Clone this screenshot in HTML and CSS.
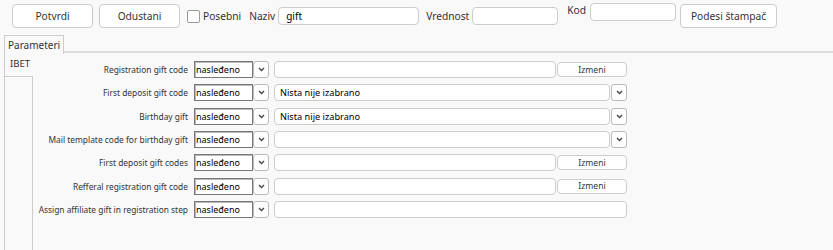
FILE: index.html
```html
<!DOCTYPE html>
<html lang="sr">
<head>
    <meta charset="UTF-8">
    <title>Parametri</title>
    <link rel="stylesheet" href="styles.css">
</head>
<body>
    <div class="toolbar">
        <button class="btn btn-main">Potvrdi</button>
        <button class="btn btn-main btn-cancel">Odustani</button>
        <span class="check"></span>
        <span class="lbl lbl-posebni">Posebni</span>
        <span class="lbl lbl-naziv">Naziv</span>
        <input class="field naziv" type="text" value="gift">
        <span class="lbl lbl-vrednost">Vrednost</span>
        <input class="field vrednost" type="text">
        <div class="kod">
            <span class="lbl lbl-kod">Kod</span>
            <input class="field kod-input" type="text">
        </div>
        <button class="btn btn-print">Podesi štampač</button>
    </div>

    <div class="tabs">
        <div class="tab-head">
            <div class="tab active">Parameteri</div>
            <div class="tab-line"></div>
        </div>
        <div class="tab-body">
            <div class="side">
                <div class="side-tab">IBET</div>
                <div class="side-rest"></div>
            </div>
            <div class="form">
                <label>Registration gift code</label>
                <div class="sel"><span class="sel-text">nasleđeno</span><span class="sel-btn"><svg width="7" height="5" viewBox="0 0 7 5"><polyline points="1,1 3.5,3.5 6,1" /></svg></span></div>
                <div class="ctl"><span class="inp inp-short"></span><button class="izmeni">Izmeni</button></div>

                <label>First deposit gift code</label>
                <div class="sel"><span class="sel-text">nasleđeno</span><span class="sel-btn"><svg width="7" height="5" viewBox="0 0 7 5"><polyline points="1,1 3.5,3.5 6,1" /></svg></span></div>
                <div class="ctl"><span class="inp inp-combo">Nista nije izabrano</span><span class="combo-btn"><svg width="7" height="5" viewBox="0 0 7 5"><polyline points="1,1 3.5,3.5 6,1" /></svg></span></div>

                <label>Birthday gift</label>
                <div class="sel"><span class="sel-text">nasleđeno</span><span class="sel-btn"><svg width="7" height="5" viewBox="0 0 7 5"><polyline points="1,1 3.5,3.5 6,1" /></svg></span></div>
                <div class="ctl"><span class="inp inp-combo">Nista nije izabrano</span><span class="combo-btn"><svg width="7" height="5" viewBox="0 0 7 5"><polyline points="1,1 3.5,3.5 6,1" /></svg></span></div>

                <label>Mail template code for birthday gift</label>
                <div class="sel"><span class="sel-text">nasleđeno</span><span class="sel-btn"><svg width="7" height="5" viewBox="0 0 7 5"><polyline points="1,1 3.5,3.5 6,1" /></svg></span></div>
                <div class="ctl"><span class="inp inp-combo"></span><span class="combo-btn"><svg width="7" height="5" viewBox="0 0 7 5"><polyline points="1,1 3.5,3.5 6,1" /></svg></span></div>

                <label>First deposit gift codes</label>
                <div class="sel"><span class="sel-text">nasleđeno</span><span class="sel-btn"><svg width="7" height="5" viewBox="0 0 7 5"><polyline points="1,1 3.5,3.5 6,1" /></svg></span></div>
                <div class="ctl"><span class="inp inp-short"></span><button class="izmeni">Izmeni</button></div>

                <label>Refferal registration gift code</label>
                <div class="sel"><span class="sel-text">nasleđeno</span><span class="sel-btn"><svg width="7" height="5" viewBox="0 0 7 5"><polyline points="1,1 3.5,3.5 6,1" /></svg></span></div>
                <div class="ctl"><span class="inp inp-short"></span><button class="izmeni">Izmeni</button></div>

                <label>Assign affiliate gift in registration step</label>
                <div class="sel"><span class="sel-text">nasleđeno</span><span class="sel-btn"><svg width="7" height="5" viewBox="0 0 7 5"><polyline points="1,1 3.5,3.5 6,1" /></svg></span></div>
                <div class="ctl"><span class="inp inp-full"></span></div>
            </div>
        </div>
    </div>
</body>
</html>
```

FILE: styles.css
```css
body {
    margin: 0;
    background: #f9f9f9;
    font-family: "Noto Sans", sans-serif;
    color: #333;
    height: 250px;
    overflow: hidden;
}
.toolbar {
    display: flex;
    align-items: center;
    height: 24px;
    padding: 4px 0 0 12px;
}
.btn {
    height: 24px;
    background: #fff;
    border: 1px solid #ccc;
    border-radius: 4px;
    font-family: inherit;
    font-size: 10.2px;
    color: #333;
    padding: 0;
}
.btn-main {
    width: 81px;
}
.btn-cancel {
    margin-left: 6px;
}
.check {
    width: 11px;
    height: 11px;
    border: 1px solid #999;
    border-radius: 2px;
    background: #fff;
    margin: 1px 0 0 7px;
}
.lbl {
    font-size: 10.2px;
    color: #333;
}
.lbl-posebni {
    margin-left: 3px;
}
.lbl-naziv {
    margin-left: 8px;
}
.lbl-vrednost {
    margin-left: 7px;
}
.field {
    box-sizing: border-box;
    height: 18px;
    border: 1px solid #ccc;
    border-radius: 4px;
    background: #fff;
    font-family: inherit;
    font-size: 10px;
    color: #000;
    padding: 0 7px;
    margin-top: -1px;
}
.naziv {
    width: 141px;
    margin-left: 3px;
}
.vrednost {
    width: 86px;
    margin-left: 3px;
}
.kod {
    display: flex;
    align-items: flex-start;
    align-self: flex-start;
    margin-left: 9px;
    margin-top: -1px;
}
.kod-input {
    width: 86px;
    margin: 0 0 0 4px;
}
.lbl-kod {
    line-height: 14px;
}
.btn-print {
    width: 97px;
    margin-left: 4px;
}
.tabs {
    margin-top: 7px;
}
.tab-head {
    display: flex;
    align-items: flex-end;
    height: 19px;
}
.tab {
    box-sizing: border-box;
    height: 19px;
    margin-left: 4px;
    width: 60px;
    border: 1px solid #ccc;
    border-bottom: none;
    font-size: 10px;
    line-height: 18px;
    padding-left: 3px;
    color: #333;
}
.tab-line {
    flex: 1;
    height: 2px;
    background: #ddd;
    margin-bottom: 1px;
}
.tab-body {
    display: flex;
    margin-left: 4px;
    border-left: 1px solid #ccc;
    height: 196px;
}
.side {
    width: 28px;
    display: flex;
    flex-direction: column;
}
.side-tab {
    height: 22px;
    font-size: 9.6px;
    line-height: 20px;
    padding-left: 5px;
    color: #333;
}
.side-rest {
    flex: 1;
    border-top: 1px solid #ccc;
    border-right: 1px solid #ccc;
}
.form {
    display: grid;
    grid-template-columns: 156px 75px 353px;
    grid-auto-rows: 17px;
    row-gap: 6.33px;
    column-gap: 5px;
    padding-top: 7px;
    align-items: center;
}
.form label {
    font-size: 8.4px;
    color: #333;
    text-align: right;
    padding-right: 1px;
}
.sel {
    display: flex;
    height: 17px;
}
.sel-text {
    box-sizing: border-box;
    width: 59px;
    height: 17px;
    border: 1px solid #777;
    box-shadow: inset 1px 1px #bbb;
    background: #fff;
    font-size: 9px;
    line-height: 15px;
    padding-left: 1px;
    color: #000;
}
.sel-btn, .combo-btn {
    box-sizing: border-box;
    width: 16px;
    height: 17px;
    border: 1px solid #bbb;
    border-radius: 3px;
    background: #fdfdfd;
    display: flex;
    align-items: center;
    justify-content: center;
}
.sel-btn svg polyline, .combo-btn svg polyline {
    fill: none;
    stroke: #444;
    stroke-width: 1.3;
}
.ctl {
    display: flex;
    align-items: center;
    height: 17px;
}
.inp {
    box-sizing: border-box;
    height: 17px;
    border: 1px solid #ccc;
    border-radius: 4px;
    background: #fff;
    font-size: 9.2px;
    line-height: 15px;
    padding-left: 5px;
    color: #000;
}
.inp-short {
    width: 282px;
}
.inp-combo {
    width: 336px;
    margin-right: 1px;
}
.inp-full {
    width: 353px;
}
.izmeni {
    box-sizing: border-box;
    width: 70px;
    height: 15px;
    margin-left: 1px;
    border: 1px solid #ccc;
    border-radius: 4px;
    background: #fff;
    font-family: inherit;
    font-size: 8.6px;
    color: #333;
    padding: 0;
}
```
